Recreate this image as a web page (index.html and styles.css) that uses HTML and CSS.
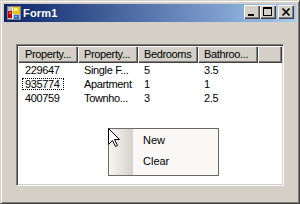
FILE: index.html
```html
<!DOCTYPE html>
<html>
<head>
<meta charset="utf-8">
<link rel="stylesheet" href="styles.css">
</head>
<body>
<div class="window">
  <div class="titlebar">
    <svg class="appicon" width="14" height="14" viewBox="0 0 14 14" shape-rendering="crispEdges">
      <rect x="0" y="0" width="14" height="14" fill="#c0c0c0"/>
      <rect x="0.5" y="0.5" width="13" height="13" fill="none" stroke="#808080"/>
      <line x1="5" y1="1" x2="5" y2="13" stroke="#ffffff"/>
      <line x1="1" y1="5" x2="13" y2="5" stroke="#ffffff"/>
      <rect x="1" y="5" width="4" height="7" fill="#c00000"/>
      <rect x="2" y="6" width="2" height="2" fill="#ff6060"/>
      <rect x="6" y="1" width="7" height="7" fill="#f0c000"/>
      <rect x="7" y="2" width="4" height="3" fill="#fff080"/>
      <rect x="7" y="9" width="5" height="4" fill="#3070d0"/>
      <rect x="8" y="10" width="2" height="1" fill="#90c0ff"/>
    </svg>
    <span class="title">Form1</span>
    <div class="tbuttons">
      <div class="tbtn">
        <svg width="16" height="14" viewBox="0 0 16 14" shape-rendering="crispEdges"><rect x="4" y="9" width="6" height="2" fill="#000"/></svg>
      </div>
      <div class="tbtn">
        <svg width="16" height="14" viewBox="0 0 16 14" shape-rendering="crispEdges"><rect x="3.5" y="2.5" width="8" height="8" fill="none" stroke="#000"/><rect x="3" y="2" width="9" height="2" fill="#000"/></svg>
      </div>
      <div class="tbtn close">
        <svg width="16" height="14" viewBox="0 0 16 14"><path d="M4.5 3.5 L11.5 10.5 M11.5 3.5 L4.5 10.5" stroke="#000" stroke-width="1.7" fill="none"/></svg>
      </div>
    </div>
  </div>
  <div class="client">
    <div class="listview">
      <div class="header">
        <div class="hcell first">Property...</div>
        <div class="hcell">Property...</div>
        <div class="hcell">Bedrooms</div>
        <div class="hcell">Bathroo...</div>
        <div class="hcell filler"></div>
      </div>
      <div class="row">
        <div class="cell first">229647</div>
        <div class="cell">Single F...</div>
        <div class="cell">5</div>
        <div class="cell">3.5</div>
      </div>
      <div class="row">
        <div class="cell first"><span class="focus">935774</span></div>
        <div class="cell">Apartment</div>
        <div class="cell">1</div>
        <div class="cell">1</div>
      </div>
      <div class="row">
        <div class="cell first">400759</div>
        <div class="cell">Townho...</div>
        <div class="cell">3</div>
        <div class="cell">2.5</div>
      </div>
    </div>
  </div>
  <div class="menu">
    <div class="mitem">New</div>
    <div class="mitem">Clear</div>
  </div>
  <svg class="cursor" width="12" height="20" viewBox="0 0 12 20">
    <path d="M0.5 0.5 L0.5 16.5 L4.5 12.5 L7.5 18.5 L9.5 17.5 L6.5 11.5 L11.5 11.5 Z" fill="#fff" stroke="#000" stroke-width="1" stroke-linejoin="miter"/>
  </svg>
</div>
</body>
</html>
```

FILE: styles.css
```css
html, body {
  margin: 0;
  padding: 0;
  background: #d4d0c8;
}
body {
  width: 300px;
  height: 204px;
  overflow: hidden;
  font-family: "Liberation Sans", Arial, sans-serif;
}
.window {
  position: relative;
  box-sizing: border-box;
  width: 300px;
  height: 204px;
  background: #d4d0c8;
  border: 1px solid;
  border-color: #d4d0c8 #404040 #404040 #d4d0c8;
  box-shadow: inset 1px 1px #ffffff, inset -1px -1px #808080;
  padding: 3px;
  display: flex;
  flex-direction: column;
}
.titlebar {
  height: 18px;
  flex: none;
  display: flex;
  align-items: center;
  background: linear-gradient(to right, #0a246a, #a6caf0);
  padding: 0 2px 0 3px;
}
.appicon {
  flex: none;
  display: block;
}
.title {
  margin-left: 2px;
  color: #ffffff;
  font-weight: bold;
  font-size: 11px;
  letter-spacing: 0.2px;
}
.tbuttons {
  margin-left: auto;
  display: flex;
  align-self: flex-start;
  margin-top: 1px;
}
.tbtn {
  width: 16px;
  height: 14px;
  background: #d4d0c8;
  box-shadow: inset 1px 1px #ffffff, inset -1px -1px #404040, inset -2px -2px #808080;
}
.tbtn svg {
  display: block;
}
.tbtn.close {
  margin-left: 2px;
}
.client {
  flex: 1;
  padding: 22px 12px 14px 12px;
  display: flex;
}
.listview {
  flex: 1;
  box-sizing: border-box;
  background: #ffffff;
  border: 1px solid;
  border-color: #808080 #ffffff #ffffff #808080;
  box-shadow: inset 1px 1px #404040, inset -1px -1px #d4d0c8;
  padding: 1px;
  font-size: 11px;
  letter-spacing: -0.35px;
  color: #000;
}
.header {
  display: flex;
  height: 17px;
}
.hcell {
  box-sizing: border-box;
  width: 60px;
  flex: none;
  height: 17px;
  line-height: 16px;
  padding-left: 6px;
  background: #d4d0c8;
  box-shadow: inset 1px 1px #ffffff, inset -1px -1px #404040, inset -2px -2px #808080;
  white-space: nowrap;
  overflow: hidden;
}
.hcell.first {
  padding-left: 7px;
}
.hcell.filler {
  flex: 1;
  width: auto;
}
.row {
  display: flex;
  height: 14px;
  line-height: 14px;
}
.cell {
  box-sizing: border-box;
  width: 60px;
  flex: none;
  padding-left: 6px;
  white-space: nowrap;
  overflow: hidden;
}
.cell.first {
  padding-left: 4px;
}
.focus {
  display: inline-block;
  border: 1px dotted #000;
  padding: 0 3px 0 2px;
  line-height: 10px;
  height: 10px;
}
.cell.first:not(:has(.focus)) {
  padding-left: 7px;
}
.menu {
  position: absolute;
  left: 107px;
  top: 127px;
  box-sizing: border-box;
  width: 111px;
  height: 48px;
  border: 1px solid #6a6a6a;
  background: linear-gradient(to right, #f6f5f2 0, #d6d2ca 24px, #f9f8f7 24px);
  padding: 1px 0 3px 0;
  font-size: 11px;
  color: #000;
}
.mitem {
  height: 21px;
  line-height: 21px;
  padding-left: 34px;
}
.cursor {
  position: absolute;
  left: 107px;
  top: 127px;
  display: block;
}
```
